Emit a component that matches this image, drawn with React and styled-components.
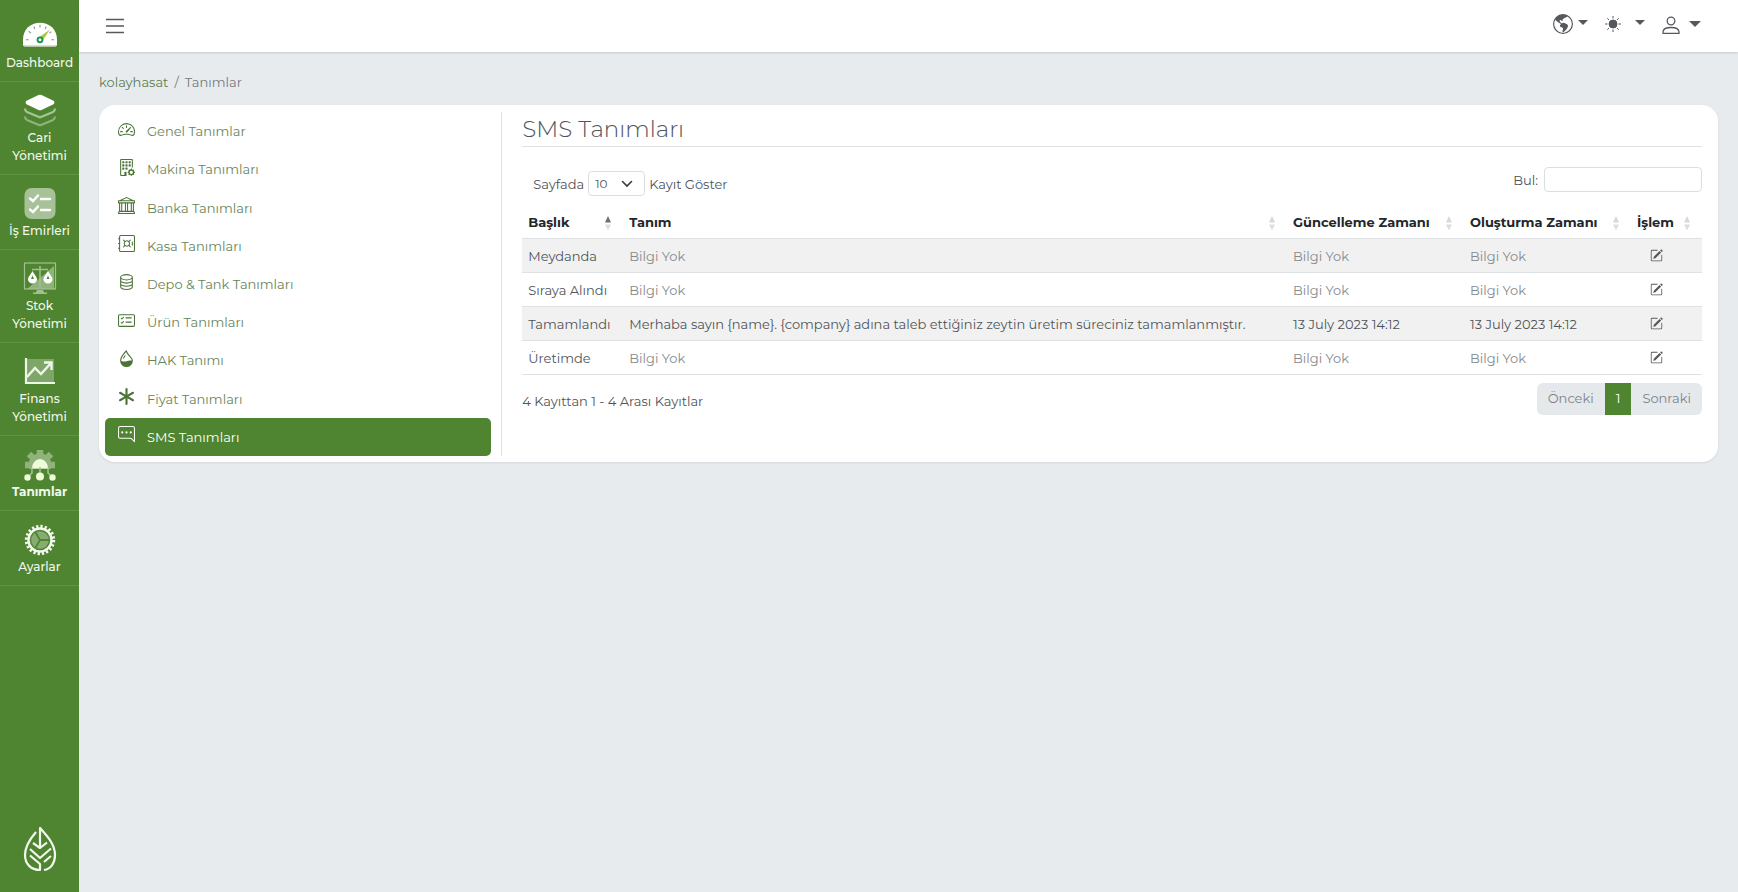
import React from 'react'
import styled, { createGlobalStyle } from 'styled-components'
import {
    BsSpeedometer2,
    BsBuildingGear,
    BsBank,
    BsSafe,
    BsDatabase,
    BsCardChecklist,
    BsDropletHalf,
    BsAsterisk,
    BsChatRightDots,
    BsGlobeAmericas,
    BsPencilSquare
} from 'react-icons/bs'

const GlobalStyle = createGlobalStyle`
    * {
        box-sizing: border-box;
    }
    body {
        margin: 0;
        background-color: #e8ebee;
        font-family: Montserrat, Inter, sans-serif;
        font-size: 13px;
        line-height: 20px;
        color: #4f5459;
    }
    button, input, select {
        font: inherit;
        color: inherit;
    }
    a {
        color: #5c7d4c;
        text-decoration: none;
    }
    h1, p {
        margin: 0;
    }
`

const Layout = styled.div`
    display: flex;
    min-height: 100vh;
`

const Sidebar = styled.nav`
    display: flex;
    flex-direction: column;
    flex-shrink: 0;
    width: 79px;
    background-color: #4f8530;
`

const SideLink = styled.a`
    display: flex;
    flex-direction: column;
    align-items: center;
    padding: 12px 4px 9px;
    border-bottom: 1px solid #60923f;
    color: #f3f8ef;
    font-size: 12px;
    font-weight: ${({ $active }) => ($active ? 700 : 500)};
    line-height: 18px;
    text-align: center;
    &:first-child {
        padding-top: 19px;
    }
    svg {
        width: 34px;
        height: 34px;
        margin-bottom: 1px;
    }
`

const Brand = styled.a`
    display: flex;
    justify-content: center;
    margin-top: auto;
    padding-bottom: 20px;
`

const Main = styled.div`
    flex: 1;
    min-width: 0;
`

const Header = styled.header`
    display: flex;
    align-items: center;
    height: 52px;
    padding: 0 37px 0 26px;
    background-color: #fff;
    box-shadow: 0 1px 2px rgba(60, 70, 80, 0.2);
`

const IconButton = styled.button`
    display: flex;
    align-items: center;
    gap: ${({ $gap }) => $gap || 0};
    padding: 0;
    border: 0;
    background: none;
    color: #55585c;
    cursor: pointer;
`

const HeaderMenu = styled.div`
    display: flex;
    align-items: center;
    gap: 17px;
    margin-left: auto;
    padding-bottom: 5px;
`

const Caret = styled.span`
    margin-bottom: ${({ $large }) => ($large ? 0 : '3px')};
    border: ${({ $large }) => ($large ? '6px' : '5px')} solid transparent;
    border-top-color: #55585c;
    border-bottom: 0;
`

const Breadcrumb = styled.div`
    display: flex;
    gap: 6px;
    padding: 20px 20px 0;
    color: #74797e;
`

const Card = styled.main`
    display: flex;
    margin: 13px 20px 20px;
    padding: 7px 16px 6px 6px;
    border-radius: 16px;
    background-color: #fff;
    box-shadow: 0 1px 2px rgba(60, 70, 80, 0.12);
`

const Menu = styled.nav`
    display: flex;
    flex-direction: column;
    flex: 0 0 calc(25% - 2px);
    min-height: 344px;
    padding-right: 10px;
    border-right: 1px solid #dfe2e5;
`

const MenuLink = styled.a`
    display: flex;
    flex: 1;
    align-items: center;
    gap: 12px;
    padding: 0 13px;
    border-radius: 5px;
    background-color: ${({ $active }) => ($active ? '#4f8530' : 'transparent')};
    color: ${({ $active }) => ($active ? '#fff' : '#67855a')};
    svg {
        width: 17px;
        height: 17px;
        margin-bottom: 4px;
        color: ${({ $active }) => ($active ? '#fff' : '#4b7337')};
    }
`

const Content = styled.section`
    flex: 1;
    min-width: 0;
    padding-left: 20px;
`

const Title = styled.h1`
    padding: 2px 0;
    border-bottom: 1px solid #dfe2e5;
    font-size: 23px;
    font-weight: 300;
    line-height: 30px;
`

const Toolbar = styled.div`
    display: flex;
    justify-content: space-between;
    align-items: flex-start;
    padding: 20px 0 10px 11px;
`

const Field = styled.label`
    display: flex;
    align-items: center;
    gap: ${({ $gap }) => $gap};
    margin-top: ${({ $top }) => $top || 0};
`

const SelectWrap = styled.span`
    position: relative;
    svg {
        position: absolute;
        top: 7px;
        right: 12px;
        pointer-events: none;
    }
`

const Select = styled.select`
    appearance: none;
    display: block;
    width: 57px;
    height: 25px;
    padding: 0 6px;
    border: 1px solid #dcdfe2;
    border-radius: 4px;
    background-color: #fff;
    font-size: 12px;
`

const Search = styled.input`
    width: 158px;
    height: 25px;
    padding: 2px 7px;
    border: 1px solid #dcdfe2;
    border-radius: 4px;
    background-color: #fff;
`

const Table = styled.table`
    width: 100%;
    table-layout: fixed;
    border-collapse: separate;
    border-spacing: 0;
`

const Th = styled.th`
    position: relative;
    width: ${({ $width }) => $width || 'auto'};
    height: 33px;
    padding: 0 6px;
    border-bottom: 1px solid #dfe2e5;
    color: #24272a;
    font-weight: 700;
    text-align: left;
    white-space: nowrap;
    svg {
        position: absolute;
        top: 10px;
        right: 11px;
    }
`

const Row = styled.tr`
    background-color: ${({ $odd }) => ($odd ? '#f1f1f1' : '#fff')};
`

const Td = styled.td`
    height: 34px;
    padding: 0 6px;
    border-bottom: 1px solid #dfe2e5;
    color: ${({ $muted }) => ($muted ? '#85898d' : '#4f5459')};
    white-space: nowrap;
`

const ActionTd = styled(Td)`
    padding-right: 26px;
    button {
        margin: 0 auto;
    }
`

const Footer = styled.div`
    display: flex;
    justify-content: space-between;
    align-items: flex-start;
    padding-top: 8px;
    p {
        padding-top: 8px;
    }
`

const Pagination = styled.div`
    display: flex;
    overflow: hidden;
    border-radius: 6px;
`

const PageButton = styled.button`
    height: 32px;
    padding: 0 11px 2px;
    border: 0;
    background-color: ${({ $active }) => ($active ? '#4f8530' : '#e6e9ec')};
    color: ${({ $active }) => ($active ? '#fff' : '#7d8287')};
`

const DashboardIcon = () => (
    <svg viewBox="0 0 36 36">
        <path d="M0 25V22C0 11 8 4 18 4S36 11 36 22V27Q36 29 34 29H2Q0 29 0 27Z" fill="#fff" />
        <path d="M1 28.5H35" stroke="#b9cdb0" strokeWidth="1" />
        <path d="M18 6V9M11.5 8L12.5 10.5M24.5 8L23.5 10.5M6 13L8.5 15M30 13.5L28 15M3 22H6M30 22H33" stroke="#8d9499" strokeWidth="1.2" />
        <path d="M28.5 11L20 24L16 20Z" fill="#a9c840" />
        <circle cx="18" cy="22" r="2.6" fill="#fff" stroke="#14934a" strokeWidth="2" />
    </svg>
)

const LayersIcon = () => (
    <svg viewBox="0 0 34 34">
        <path d="M2 22.5Q2 25 4 26L16 31Q17 31.5 18 31L30 26Q32 25 32 22.5" fill="none" stroke="#8fb37b" strokeWidth="2.2" />
        <path d="M2 14.5Q2 17 4 18L16 23Q17 23.5 18 23L30 18Q32 17 32 14.5" fill="none" stroke="#a7c497" strokeWidth="2.2" />
        <path d="M15.5 1Q17 0.3 18.5 1L30 6.5Q33 8.500 30 10.5L18.5 16Q17 16.7 15.5 16L4 10.5Q1 8.500 4 6.5Z" fill="#fff" />
    </svg>
)

const TasksIcon = () => (
    <svg viewBox="0 0 34 34">
        <rect x="1.5" y="1" width="31" height="31" rx="7" fill="#a7c298" />
        <path d="M7 11.5L10 14L15 8.5M7 22.5L10 25L15 19.5M18 12H27M18 23H27" fill="none" stroke="#fff" strokeWidth="2.4" strokeLinecap="round" />
    </svg>
)

const StockIcon = () => (
    <svg viewBox="0 0 34 34">
        <path d="M31 4V27H4Z" fill="#8fb37b" />
        <rect x="1.5" y="1" width="31" height="26" fill="none" stroke="#a3c092" strokeWidth="1.2" />
        <path d="M9 7.5H25M17 4V26" fill="none" stroke="#a3c092" strokeWidth="1.5" />
        <path d="M14 28H20L21 30.500H24V32H10V30.500H13Z" fill="#a3c092" />
        <path d="M9.5 9C7.5 13 5 14.5 5 17.5A4.5 4 0 0 0 14 17.5C14 14.5 11.5 13 9.5 9ZM25 9C23 13 20.5 14.5 20.5 17.5A4.5 4 0 0 0 29.5 17.5C29.5 14.5 27 13 25 9Z" fill="#fff" />
        <path d="M9.5 13.500L11 17H8ZM25 13.500L26.500 17H23.500Z" fill="#4f8530" />
    </svg>
)

const FinanceIcon = () => (
    <svg viewBox="0 0 34 34">
        <rect x="4" y="4" width="27" height="24" fill="#7fa669" />
        <path d="M3 3V28H32" fill="none" stroke="#eef5e9" strokeWidth="2.2" />
        <path d="M4 22L12 13L18 19L28 8M21 7.5H28.5V15" fill="none" stroke="#eef5e9" strokeWidth="2.4" />
    </svg>
)

const DefinitionsIcon = () => (
    <svg viewBox="0 0 34 34">
        <circle cx="17" cy="17" r="11.5" fill="#8fb37b" />
        <path d="M17 2V12M6 6L12 12M28 6L22 12M2 17H12M32 17H22" stroke="#8fb37b" strokeWidth="6.500" />
        <path d="M0 21H34V34H0Z" fill="#4f8530" />
        <path d="M9 20.5A8 9.5 0 0 1 25 20.5Z" fill="#effbd9" />
        <path d="M9 20V25L5 29M17 19V29M25 20V25L29 29" fill="none" stroke="#a7c497" strokeWidth="1.5" />
        <g fill="#effbd9">
            <circle cx="4.5" cy="29.5" r="3.2" />
            <circle cx="17" cy="28.5" r="4" />
            <circle cx="29.5" cy="29.5" r="3.2" />
        </g>
    </svg>
)

const SettingsIcon = () => (
    <svg viewBox="0 0 34 34">
        <circle cx="17" cy="17" r="13.6" fill="none" stroke="#f3f8ef" strokeWidth="3.2" strokeDasharray="2.25 2.022" />
        <circle cx="17" cy="17" r="11.5" fill="none" stroke="#f3f8ef" strokeWidth="2.4" />
        <circle cx="17" cy="17" r="8.8" fill="#86ac71" />
        <path d="M17 17H27M17 17L12 8.5M17 17L12 25.5" stroke="#4f8530" strokeWidth="1.8" />
    </svg>
)

const LeafIcon = () => (
    <svg width="34" height="46" viewBox="0 0 34 46" fill="none" stroke="#f3f8ef" strokeWidth="2.2" strokeLinejoin="round">
        <path d="M13 6C7 13 2 20 2 29C2 38 8 44 17 44V38L7 29.5" />
        <path d="M21 44C28 43 32 37 32 29C32 18 24 10 17 2V22L10 17" />
        <path d="M7 23L17 32L28 22.500M17 22L24 16.500M21 36L28 30" />
    </svg>
)

const MenuIcon = () => (
    <svg width="20" height="20" viewBox="0 0 20 20" stroke="#55585c" strokeWidth="1.5">
        <path d="M1 3.5H19M1 10H19M1 16.5H19" />
    </svg>
)

const SunIcon = () => (
    <svg width="16" height="18" viewBox="1 0 16 18" stroke="#55585c">
        <circle cx="9" cy="9" r="4" fill="#55585c" />
        <path d="M9 1V3.5M9 14.5V17M1 9H3.5M14.5 9H17M3.3 3.3L5 5M13 13L14.7 14.7M3.3 14.7L5 13M13 5L14.7 3.3" />
    </svg>
)

const UserIcon = () => (
    <svg width="18" height="20" viewBox="0 0 18 20" fill="none" stroke="#55585c" strokeWidth="1.3">
        <circle cx="9" cy="7" r="3.8" />
        <path d="M1 19.3V18C1 15 4 13.5 9 13.5S17 15 17 18V19.3Z" />
    </svg>
)

const ChevronIcon = () => (
    <svg width="12" height="12" viewBox="0 0 12 12" fill="none" stroke="#343a40" strokeWidth="1.6" strokeLinecap="round">
        <path d="M1.5 3.5L6 8L10.5 3.5" />
    </svg>
)

const SortIcon = ({ asc }) => (
    <svg width="8" height="15" viewBox="0 0 8 15">
        <path d="M4 0L7 6.5H1Z" fill={asc ? '#707070' : '#d8d8d8'} />
        <path d="M4 14.5L7 8.5H1Z" fill="#dedede" />
    </svg>
)

const sideItems = [
    { label: 'Dashboard', Icon: DashboardIcon },
    { label: 'Cari Yönetimi', Icon: LayersIcon },
    { label: 'İş Emirleri', Icon: TasksIcon },
    { label: 'Stok Yönetimi', Icon: StockIcon },
    { label: 'Finans Yönetimi', Icon: FinanceIcon },
    { label: 'Tanımlar', Icon: DefinitionsIcon, active: true },
    { label: 'Ayarlar', Icon: SettingsIcon }
]

const menuItems = [
    { label: 'Genel Tanımlar', Icon: BsSpeedometer2 },
    { label: 'Makina Tanımları', Icon: BsBuildingGear },
    { label: 'Banka Tanımları', Icon: BsBank },
    { label: 'Kasa Tanımları', Icon: BsSafe },
    { label: 'Depo & Tank Tanımları', Icon: BsDatabase },
    { label: 'Ürün Tanımları', Icon: BsCardChecklist },
    { label: 'HAK Tanımı', Icon: BsDropletHalf },
    { label: 'Fiyat Tanımları', Icon: BsAsterisk },
    { label: 'SMS Tanımları', Icon: BsChatRightDots, active: true }
]

const columns = [
    { label: 'Başlık', width: '101px', asc: true },
    { label: 'Tanım' },
    { label: 'Güncelleme Zamanı', width: '177px' },
    { label: 'Oluşturma Zamanı', width: '167px' },
    { label: 'İşlem', width: '71px' }
]

const rows = [
    { baslik: 'Meydanda' },
    { baslik: 'Sıraya Alındı' },
    {
        baslik: 'Tamamlandı',
        tanim: 'Merhaba sayın {name}. {company} adına taleb ettiğiniz zeytin üretim süreciniz tamamlanmıştır.',
        guncelleme: '13 July 2023 14:12',
        olusturma: '13 July 2023 14:12'
    },
    { baslik: 'Üretimde' }
]

const Cell = ({ value }) => <Td $muted={!value}>{value || 'Bilgi Yok'}</Td>

const App = () => {
    return (
        <Layout>
            <GlobalStyle />
            <Sidebar>
                {sideItems.map(({ label, Icon, active }) => (
                    <SideLink key={label} href="#" $active={active}>
                        <Icon />
                        {label}
                    </SideLink>
                ))}
                <Brand href="#" aria-label="kolayhasat">
                    <LeafIcon />
                </Brand>
            </Sidebar>

            <Main>
                <Header>
                    <IconButton aria-label="Menü">
                        <MenuIcon />
                    </IconButton>
                    <HeaderMenu>
                        <IconButton $gap="5px" aria-label="Dil">
                            <BsGlobeAmericas size={20} />
                            <Caret />
                        </IconButton>
                        <IconButton $gap="14px" aria-label="Tema">
                            <SunIcon />
                            <Caret />
                        </IconButton>
                        <IconButton $gap="9px" aria-label="Hesap">
                            <UserIcon />
                            <Caret $large />
                        </IconButton>
                    </HeaderMenu>
                </Header>

                <Breadcrumb>
                    <a href="#">kolayhasat</a>
                    <span>/</span>
                    <span>Tanımlar</span>
                </Breadcrumb>

                <Card>
                    <Menu>
                        {menuItems.map(({ label, Icon, active }) => (
                            <MenuLink key={label} href="#" $active={active}>
                                <Icon />
                                {label}
                            </MenuLink>
                        ))}
                    </Menu>

                    <Content>
                        <Title>SMS Tanımları</Title>
                        <Toolbar>
                            <Field $gap="4px" $top="4px">
                                Sayfada
                                <SelectWrap>
                                    <Select defaultValue="10">
                                        <option>10</option>
                                        <option>25</option>
                                        <option>50</option>
                                    </Select>
                                    <ChevronIcon />
                                </SelectWrap>
                                Kayıt Göster
                            </Field>
                            <Field $gap="6px">
                                Bul:
                                <Search type="search" />
                            </Field>
                        </Toolbar>

                        <Table>
                            <thead>
                                <tr>
                                    {columns.map(({ label, width, asc }) => (
                                        <Th key={label} $width={width}>
                                            {label}
                                            <SortIcon asc={asc} />
                                        </Th>
                                    ))}
                                </tr>
                            </thead>
                            <tbody>
                                {rows.map((row, i) => (
                                    <Row key={row.baslik} $odd={i % 2 === 0}>
                                        <Td>{row.baslik}</Td>
                                        <Cell value={row.tanim} />
                                        <Cell value={row.guncelleme} />
                                        <Cell value={row.olusturma} />
                                        <ActionTd>
                                            <IconButton aria-label="Düzenle">
                                                <BsPencilSquare size={13} />
                                            </IconButton>
                                        </ActionTd>
                                    </Row>
                                ))}
                            </tbody>
                        </Table>

                        <Footer>
                            <p>4 Kayıttan 1 - 4 Arası Kayıtlar</p>
                            <Pagination>
                                <PageButton>Önceki</PageButton>
                                <PageButton $active>1</PageButton>
                                <PageButton>Sonraki</PageButton>
                            </Pagination>
                        </Footer>
                    </Content>
                </Card>
            </Main>
        </Layout>
    )
}

export default App
